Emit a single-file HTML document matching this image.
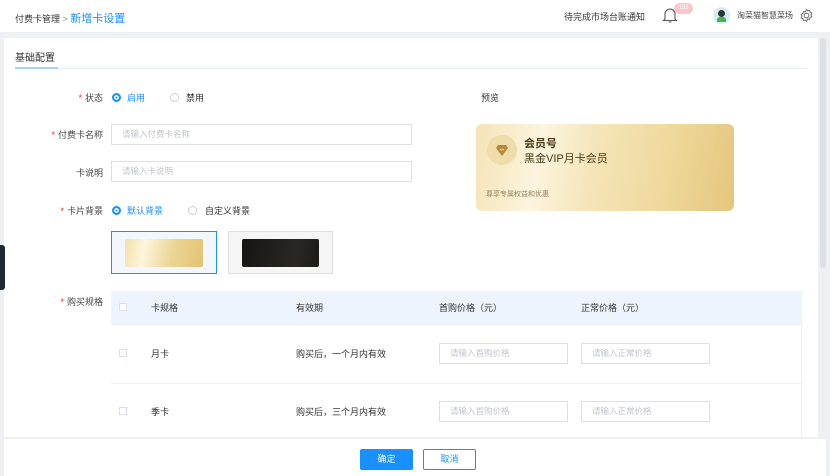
<!DOCTYPE html><html><head><meta charset="utf-8"><style>
*{box-sizing:border-box;margin:0;padding:0}
body{width:830px;height:476px;overflow:hidden;background:#eef0f4;font-family:"Liberation Sans","Noto Sans CJK SC",sans-serif;font-size:9px;color:#333;position:relative}
.a{position:absolute}
.hdr{left:0;top:0;width:830px;height:32px;background:#fff}
.panel{left:4px;top:38px;width:814px;height:438px;background:#fff}
.lbl{text-align:right;width:60px;color:#444}
.lbl b{color:#f5222d;font-weight:normal;margin-right:3px}
.inp{border:1px solid #dcdfe6;height:21px;color:#c0c4cc;padding-left:10px;line-height:19px;font-size:8.5px;background:#fff}
.rad{width:9px;height:9px;border-radius:50%;border:1px solid #d0d0d0}
.radon{width:9px;height:9px;border-radius:50%;background:#1890ff;border:2.5px solid #1890ff;box-shadow:inset 0 0 0 1.5px #fff}
.cb{width:8px;height:8px;border:1px solid #dcdfe6;background:#fff}
</style></head><body>
<div class="a hdr"></div>
<div class="a" style="left:15px;top:10px;font-size:9px;color:#333">付费卡管理 <span style="color:#888">&gt;</span> <span style="color:#1890ff;font-size:11px">新增卡设置</span></div>
<div class="a" style="left:564px;top:10px;font-size:9px">待完成市场台账通知</div>
<svg class="a" style="left:662px;top:6px" width="16" height="18" viewBox="0 0 16 18"><path d="M3 13V8a5 5 0 0110 0v5l1.5 1.5h-13z M6.5 16h3" fill="none" stroke="#555" stroke-width="1.1"/></svg>
<div class="a" style="left:674px;top:3px;width:19px;height:11px;border-radius:6px;background:#f7c8c8;color:#fff;font-size:6px;text-align:center;line-height:11px">152</div>
<div class="a" style="left:713px;top:7px;width:17px;height:17px;border-radius:50%;background:#d4eef5"></div>
<div class="a" style="left:718px;top:10px;width:7px;height:7px;border-radius:50%;background:#333"></div>
<div class="a" style="left:717px;top:17px;width:9px;height:5px;background:#4caf50;border-radius:3px 3px 0 0"></div>
<div class="a" style="left:737px;top:10px;font-size:8px;color:#444">淘菜猫智慧菜场</div>
<svg class="a" style="left:799px;top:8px" width="15" height="15" viewBox="0 0 16 16"><circle cx="8" cy="8" r="2.5" fill="none" stroke="#666"/><path d="M8 1.5l1.3 1.6 2-.5.5 2 1.9.9-.9 1.9.9 1.9-1.9.9-.5 2-2-.5L8 14.5l-1.3-1.6-2 .5-.5-2-1.9-.9.9-1.9-.9-1.9 1.9-.9.5-2 2 .5z" fill="none" stroke="#666"/></svg>
<div class="a panel"></div>
<div class="a" style="left:820px;top:38px;width:6px;height:230px;background:#dcdfe4;border-radius:3px"></div>
<div class="a" style="left:15px;top:49px;font-size:10px;color:#333">基础配置</div>
<div class="a" style="left:15px;top:68px;width:792px;height:1px;background:#e6ecf3"></div>
<div class="a" style="left:15px;top:67px;width:43px;height:2px;background:#a9d2fb"></div>
<div class="a lbl" style="left:43px;top:91px"><b>*</b>状态</div>
<div class="a radon" style="left:112px;top:93px"></div><div class="a" style="left:127px;top:91px;color:#1890ff">启用</div>
<div class="a rad" style="left:170px;top:93px"></div><div class="a" style="left:186px;top:91px">禁用</div>
<div class="a" style="left:481px;top:91px">预览</div>
<div class="a lbl" style="left:43px;top:128px"><b>*</b>付费卡名称</div>
<div class="a inp" style="left:111px;top:124px;width:301px">请输入付费卡名称</div>
<div class="a lbl" style="left:43px;top:166px">卡说明</div>
<div class="a inp" style="left:111px;top:161px;width:301px">请输入卡说明</div>
<div class="a" style="left:476px;top:124px;width:258px;height:87px;border-radius:6px;background:linear-gradient(100deg,#f4e3b6 0%,#fcf4de 25%,#f5e5ba 45%,#eed799 75%,#e4c57e 100%)"></div>
<div class="a" style="left:487px;top:135px;width:30px;height:30px;border-radius:50%;background:#efdcab"></div>
<svg class="a" style="left:495px;top:145px" width="14" height="11" viewBox="0 0 14 11"><path d="M1 3l2-3h8l2 3-6 8z" fill="#b58a3c"/><path d="M5 4q2 2 4 0" stroke="#f0dca8" fill="none"/></svg>
<div class="a" style="left:524px;top:135px;font-size:11px;font-weight:bold;color:#4a3a1a">会员号</div>
<div class="a" style="left:524px;top:150px;font-size:11px;color:#4a3a1a">黑金VIP月卡会员</div>
<div class="a" style="left:486px;top:189px;font-size:7px;color:#9a8460">尊享专属权益和优惠</div>
<div class="a lbl" style="left:43px;top:204px"><b>*</b>卡片背景</div>
<div class="a radon" style="left:112px;top:206px"></div><div class="a" style="left:127px;top:204px;color:#1890ff">默认背景</div>
<div class="a rad" style="left:188px;top:206px"></div><div class="a" style="left:205px;top:204px">自定义背景</div>
<div class="a" style="left:111px;top:231px;width:106px;height:43px;border:1px solid #1890ff;background:#f2f7fd"></div>
<div class="a" style="left:125px;top:239px;width:78px;height:28px;border-radius:2px;background:linear-gradient(100deg,#f3e1ab,#fdf5dc 25%,#ecd595 60%,#e2c373)"></div>
<div class="a" style="left:228px;top:231px;width:105px;height:43px;border:1px solid #dcdfe6;background:#f5f5f5"></div>
<div class="a" style="left:242px;top:239px;width:77px;height:28px;border-radius:2px;background:linear-gradient(100deg,#161514,#2a2723 70%,#1c1a17)"></div>
<div class="a lbl" style="left:43px;top:295px"><b>*</b>购买规格</div>
<div class="a" style="left:111px;top:291px;width:691px;height:33px;background:#edf4fd"></div>
<div class="a" style="left:111px;top:324px;width:691px;height:1px;background:#e8edf3"></div>
<div class="a" style="left:111px;top:383px;width:691px;height:1px;background:#eef0f3"></div>
<div class="a" style="left:801px;top:324px;width:1px;height:114px;background:#eef0f3"></div>
<div class="a cb" style="left:119px;top:303px"></div>
<div class="a" style="left:151px;top:301px">卡规格</div><div class="a" style="left:296px;top:301px">有效期</div>
<div class="a" style="left:439px;top:301px">首购价格（元）</div><div class="a" style="left:581px;top:301px">正常价格（元）</div>
<div class="a cb" style="left:119px;top:349px"></div>
<div class="a" style="left:151px;top:347px">月卡</div><div class="a" style="left:296px;top:347px">购买后，一个月内有效</div>
<div class="a inp" style="left:439px;top:343px;width:129px">请输入首购价格</div>
<div class="a inp" style="left:581px;top:343px;width:129px">请输入正常价格</div>
<div class="a cb" style="left:119px;top:407px"></div>
<div class="a" style="left:151px;top:405px">季卡</div><div class="a" style="left:296px;top:405px">购买后，三个月内有效</div>
<div class="a inp" style="left:439px;top:401px;width:129px">请输入首购价格</div>
<div class="a inp" style="left:581px;top:401px;width:129px">请输入正常价格</div>
<div class="a" style="left:4px;top:437px;width:822px;height:39px;background:#fff;border-top:2px solid #eef0f4"></div>
<div class="a" style="left:360px;top:449px;width:53px;height:21px;background:#1890ff;color:#fff;text-align:center;line-height:21px;border-radius:2px">确定</div>
<div class="a" style="left:423px;top:449px;width:53px;height:21px;border:1px solid #1890ff;color:#1890ff;text-align:center;line-height:19px;border-radius:2px;background:#fff">取消</div>
<div class="a" style="left:0;top:245px;width:5px;height:45px;background:#1c2a33;border-radius:0 3px 3px 0"></div>
</body></html>
